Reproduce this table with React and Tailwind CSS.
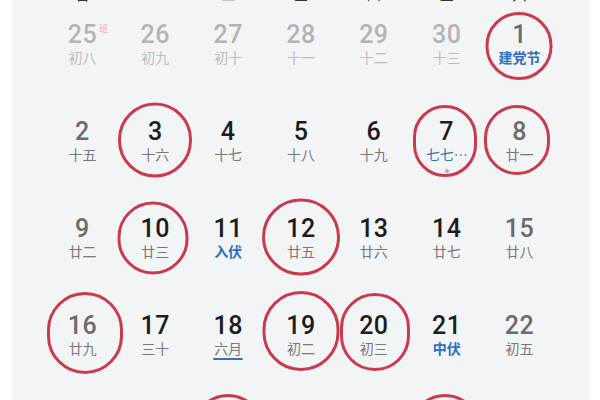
import React from "react";

const PREV_N = "text-[#b4b4b4]";
const WEEKEND_N = "text-[#6b6b6b]";
const DAY_N = "text-[#1c1c1c]";
const PREV_L = "text-[#bdbdbd]";
const NORM_L = "text-[#787878]";
const FEST_L = "text-[#2f6ebf] font-semibold";

const rows = [
  [
    { n: "25", l: "初八", nc: PREV_N, lc: PREV_L, ban: true },
    { n: "26", l: "初九", nc: PREV_N, lc: PREV_L },
    { n: "27", l: "初十", nc: PREV_N, lc: PREV_L },
    { n: "28", l: "十一", nc: PREV_N, lc: PREV_L },
    { n: "29", l: "十二", nc: PREV_N, lc: PREV_L },
    { n: "30", l: "十三", nc: PREV_N, lc: PREV_L },
    { n: "1", l: "建党节", nc: WEEKEND_N, lc: FEST_L, circle: "w-[67px] h-[68px] top-[44px] ml-[-1px]" },
  ],
  [
    { n: "2", l: "十五", nc: WEEKEND_N, lc: NORM_L },
    { n: "3", l: "十六", nc: DAY_N, lc: NORM_L, circle: "w-[74px] h-[75px] top-[41px] ml-[0px]" },
    { n: "4", l: "十七", nc: DAY_N, lc: NORM_L },
    { n: "5", l: "十八", nc: DAY_N, lc: NORM_L },
    { n: "6", l: "十九", nc: DAY_N, lc: NORM_L },
    { n: "7", l: "七七…", nc: DAY_N, lc: "text-[#3b72b8]", dot: true, circle: "w-[64px] h-[72px] top-[42px] ml-[-2px]" },
    { n: "8", l: "廿一", nc: WEEKEND_N, lc: NORM_L, circle: "w-[66px] h-[70px] top-[41px] ml-[-3px]" },
  ],
  [
    { n: "9", l: "廿二", nc: WEEKEND_N, lc: NORM_L },
    { n: "10", l: "廿三", nc: DAY_N, lc: NORM_L, circle: "w-[71px] h-[73px] top-[42px] ml-[-2px]" },
    { n: "11", l: "入伏", nc: DAY_N, lc: FEST_L },
    { n: "12", l: "廿五", nc: DAY_N, lc: NORM_L, circle: "w-[78px] h-[77px] top-[41px] ml-[0px]" },
    { n: "13", l: "廿六", nc: DAY_N, lc: NORM_L },
    { n: "14", l: "廿七", nc: DAY_N, lc: NORM_L },
    { n: "15", l: "廿八", nc: WEEKEND_N, lc: NORM_L },
  ],
  [
    { n: "16", l: "廿九", nc: WEEKEND_N, lc: NORM_L, circle: "w-[76px] h-[82px] top-[40px] ml-[3px]" },
    { n: "17", l: "三十", nc: DAY_N, lc: NORM_L },
    { n: "18", l: "六月", nc: DAY_N, lc: NORM_L, underline: true },
    { n: "19", l: "初二", nc: DAY_N, lc: NORM_L, circle: "w-[77px] h-[80px] top-[38px] ml-[0px]" },
    { n: "20", l: "初三", nc: DAY_N, lc: NORM_L, circle: "w-[70px] h-[78px] top-[39px] ml-[1px]" },
    { n: "21", l: "中伏", nc: DAY_N, lc: FEST_L },
    { n: "22", l: "初五", nc: WEEKEND_N, lc: NORM_L },
  ],
  [
    { n: "23", l: "初六", nc: WEEKEND_N, lc: NORM_L },
    { n: "24", l: "初七", nc: DAY_N, lc: NORM_L },
    { n: "25", l: "初八", nc: DAY_N, lc: NORM_L, circle: "w-[72px] h-[76px] top-[42px] ml-[0px]" },
    { n: "26", l: "初九", nc: DAY_N, lc: NORM_L },
    { n: "27", l: "初十", nc: DAY_N, lc: NORM_L },
    { n: "28", l: "十一", nc: DAY_N, lc: NORM_L, circle: "w-[72px] h-[76px] top-[42px] ml-[-2px]" },
    { n: "29", l: "十二", nc: WEEKEND_N, lc: NORM_L },
  ],
];

const weekdays = ["日", "一", "二", "三", "四", "五", "六"];

function Cell({ c }) {
  return (
    <div className="relative h-[97px] flex flex-col items-center pt-[20px]">
      {c.circle && (
        <div
          className={
            "absolute left-1/2 -translate-x-1/2 -translate-y-1/2 rounded-full border-[3px] border-[#c93a4d] " +
            c.circle
          }
        />
      )}
      <div className="relative">
        <span
          className={
            "block text-[25px] leading-[26px] font-medium tracking-[0.5px] " + c.nc
          }
          style={{ fontFamily: "Roboto, 'Noto Sans', sans-serif" }}
        >
          {c.n}
        </span>
        {c.ban && (
          <span
            className="absolute right-[-11px] top-[2px] text-[9px] leading-[10px] text-[#f2a9b1]"
            style={{ fontFamily: "'Noto Sans CJK SC', sans-serif" }}
          >
            班
          </span>
        )}
      </div>
      <span
        className={"block text-[14px] leading-[18px] whitespace-nowrap " + c.lc}
        style={{ fontFamily: "'Noto Sans CJK SC', 'Noto Sans', sans-serif" }}
      >
        {c.l}
      </span>
      {c.dot && <div className="mt-[6px] w-[4px] h-[4px] rounded-full bg-[#8db1e3]" />}
      {c.underline && <div className="mt-[1px] w-[30px] h-[2px] rounded-full bg-[#3a6fb5]" />}
    </div>
  );
}

export default function App() {
  return (
    <div className="w-[600px] h-[400px] overflow-hidden bg-white">
      <div className="ml-[12px] w-[578px] h-[400px] bg-[#f3f4f6] px-[34px] overflow-hidden">
        <div className="mt-[-18px] h-[20px] grid grid-cols-7 items-end">
          {weekdays.map((w) => (
            <div
              key={w}
              className="text-center text-[14px] leading-[16px] text-[#333]"
              style={{ fontFamily: "'Noto Sans CJK SC', sans-serif" }}
            >
              {w}
            </div>
          ))}
        </div>
        {rows.map((r, i) => (
          <div key={i} className="grid grid-cols-7">
            {r.map((c, j) => (
              <Cell key={j} c={c} />
            ))}
          </div>
        ))}
      </div>
    </div>
  );
}
